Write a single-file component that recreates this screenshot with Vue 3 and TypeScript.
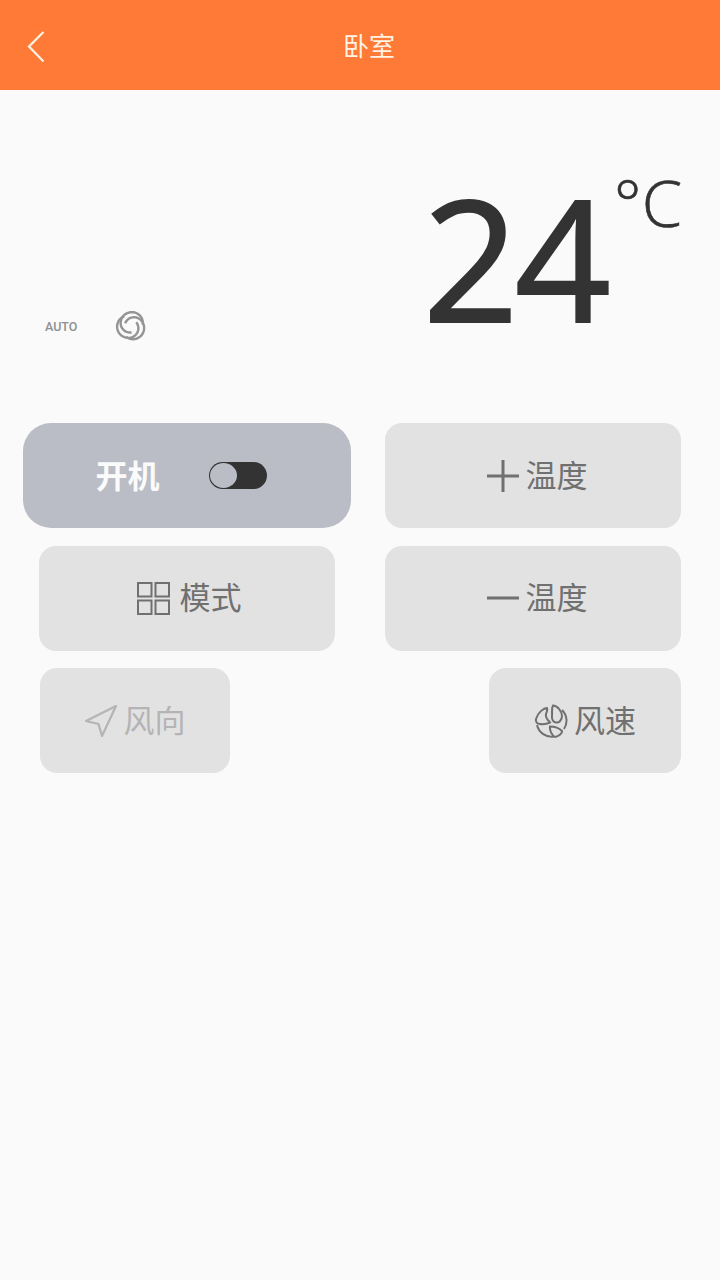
<script setup lang="ts">
import { ref, computed } from 'vue'

const title = ref<string>('卧室')
const temperature = ref<number>(24)
const mode = ref<string>('AUTO')

// one arm of the swirl: tucks in under the previous arm, bulges out, then curls to the middle
const swirlArm = computed(() => {
  const points: string[] = []
  for (let i = 0; i <= 40; i++) {
    const t = i / 40
    const angle = ((-5 - t * 270) * Math.PI) / 180
    const k = Math.max(0, (t - 0.25) / 0.75)
    const r = t < 0.25 ? 11.8 + 2.2 * Math.sin((t / 0.25) * Math.PI * 0.5) : 14 - 7.5 * k * k * (3 - 2 * k)
    points.push((16 + r * Math.cos(angle)).toFixed(2) + ' ' + (16 + r * Math.sin(angle)).toFixed(2))
  }
  return 'M' + points.join(' L')
})
</script>

<template>
  <div class="page">
    <header class="header">
      <svg class="back" width="20" height="34" viewBox="0 0 20 34">
        <path d="M17.5 2 L3 16.5 L17.5 31.5" fill="none" stroke="#fff3e4" stroke-width="2.2" />
      </svg>
      <span class="title">{{ title }}</span>
    </header>

    <section class="status">
      <div class="status-left">
        <span class="mode">{{ mode }}</span>
        <svg class="swirl" width="32" height="32" viewBox="0 0 32 32" fill="none" stroke="#949494" stroke-width="2.4">
          <path :d="swirlArm" />
          <path :d="swirlArm" transform="rotate(120 16 16)" />
          <path :d="swirlArm" transform="rotate(240 16 16)" />
        </svg>
      </div>
      <div class="temp">
        <span class="temp-value">{{ temperature }}</span>
        <span class="temp-unit">°C</span>
      </div>
    </section>

    <section class="controls">
      <div class="row row-power">
        <button class="btn btn-power">
          <span class="power-label">开机</span>
          <span class="switch"><span class="knob"></span></span>
        </button>
        <button class="btn btn-wide btn-temp">
          <svg width="32" height="32" viewBox="0 0 32 32"><path d="M0 16 H32 M16 0 V32" stroke="#707070" stroke-width="3" /></svg>
          <span class="label">温度</span>
        </button>
      </div>
      <div class="row row-mode">
        <button class="btn btn-wide btn-mode">
          <svg width="33" height="33" viewBox="0 0 33 33" fill="none" stroke="#707070" stroke-width="2">
            <rect x="1" y="1" width="13.5" height="13.5" />
            <rect x="18.5" y="1" width="13.5" height="13.5" />
            <rect x="1" y="18.5" width="13.5" height="13.5" />
            <rect x="18.5" y="18.5" width="13.5" height="13.5" />
          </svg>
          <span class="label">模式</span>
        </button>
        <button class="btn btn-wide btn-temp">
          <svg width="32" height="32" viewBox="0 0 32 32"><path d="M0 16 H32" stroke="#707070" stroke-width="3" /></svg>
          <span class="label">温度</span>
        </button>
      </div>
      <div class="row row-wind">
        <button class="btn btn-narrow disabled">
          <svg width="32" height="32" viewBox="0 0 32 32" fill="none" stroke="#b4b4b4" stroke-width="2.2" stroke-linejoin="round">
            <path d="M31 1 L1 16 L13.5 19 L17 31 Z" />
          </svg>
          <span class="label">风向</span>
        </button>
        <button class="btn btn-narrow btn-speed">
          <svg width="34" height="34" viewBox="0 0 34 34" fill="none" stroke="#707070" stroke-width="2">
            <path d="M19 1.5 C23 1.5 28 7 28 12 C28 16 25 19 22 18.5 C19 18 17.5 15 18 12 C18.5 8 17 5 19 1.5 Z" />
            <path d="M13 4 C10 4 4 8 2 15 C1.5 18 3 20 6 20 C10 20.5 13 20 16 18.5 C14 16 11 14 12 10 C12.5 8 14 6 13 4 Z" />
            <path d="M16 22.5 C20 22.5 25 24 28 27 C28.5 29 25 32.5 21 33 C17.5 31 15.5 26 16 22.5 Z" />
            <path d="M28 6 A15 15 0 0 1 30 25" />
            <path d="M3 21 A15 15 0 0 0 20 32.5" />
          </svg>
          <span class="label">风速</span>
        </button>
      </div>
    </section>
  </div>
</template>

<style scoped>
.page {
  width: 720px;
  height: 1280px;
  background: #fafafa;
  font-family: "Noto Sans CJK SC", "Noto Sans", sans-serif;
  overflow: hidden;
}

.header {
  position: relative;
  height: 90px;
  background: #ff7937;
  display: flex;
  align-items: center;
  justify-content: center;
  padding-left: 18px;
  box-sizing: border-box;
}

.back {
  position: absolute;
  left: 26px;
  top: 30px;
}

.title {
  font-size: 26px;
  color: #fff3e4;
  margin-bottom: 2px;
}

.status {
  height: 333px;
  display: flex;
  justify-content: space-between;
  align-items: flex-start;
  padding: 0 38px 0 45px;
  box-sizing: border-box;
}

.status-left {
  display: flex;
  align-items: center;
  gap: 38px;
  margin-top: 220px;
}

.mode {
  font-family: "Roboto", sans-serif;
  font-size: 12.5px;
  font-weight: 500;
  color: #8f8f8f;
}

.swirl {
  display: block;
}

.temp {
  display: flex;
  align-items: flex-start;
  color: #333;
  font-family: "Open Sans", sans-serif;
}

.temp-value {
  font-size: 168px;
  line-height: 1;
  letter-spacing: -4px;
  margin-top: 83px;
  -webkit-text-stroke: 2px #333;
}

.temp-unit {
  font-size: 65px;
  font-weight: 300;
  line-height: 1;
  margin-top: 80px;
  margin-left: 7px;
  -webkit-text-stroke: 0.6px #333;
}

.controls {
  display: flex;
  flex-direction: column;
  gap: 17.5px;
}

.row {
  display: flex;
}

.row-power {
  padding-left: 23px;
  gap: 34px;
}

.row-mode {
  padding-left: 39px;
  gap: 50px;
}

.row-wind {
  justify-content: space-between;
  padding: 0 39px 0 40px;
}

.btn {
  height: 105px;
  border: none;
  padding: 0;
  background: #e2e2e2;
  border-radius: 17px;
  display: flex;
  align-items: center;
  justify-content: center;
  gap: 7px;
  font-family: inherit;
}

.btn-wide {
  width: 296px;
}

.btn-temp {
  padding-left: 8px;
}

.btn-mode {
  gap: 10px;
  padding-left: 4px;
}

.btn-narrow {
  width: 190px;
}

.btn-speed {
  width: 192px;
  gap: 6px;
}

.btn-power {
  width: 328px;
  background: #babdc5;
  border-radius: 28px;
  gap: 49px;
  padding-right: 12px;
}

.power-label {
  font-size: 32px;
  font-weight: 700;
  line-height: 1;
  padding-bottom: 4px;
  color: #fbfbfb;
}

.switch {
  display: block;
  width: 58px;
  height: 27px;
  border-radius: 14px;
  background: #333;
}

.knob {
  display: block;
  width: 27px;
  height: 25px;
  margin: 1px;
  border-radius: 50%;
  background: #babdc5;
}

.label {
  font-size: 31px;
  line-height: 1;
  padding-bottom: 5px;
  color: #707070;
}

.disabled .label {
  color: #b4b4b4;
}
</style>
